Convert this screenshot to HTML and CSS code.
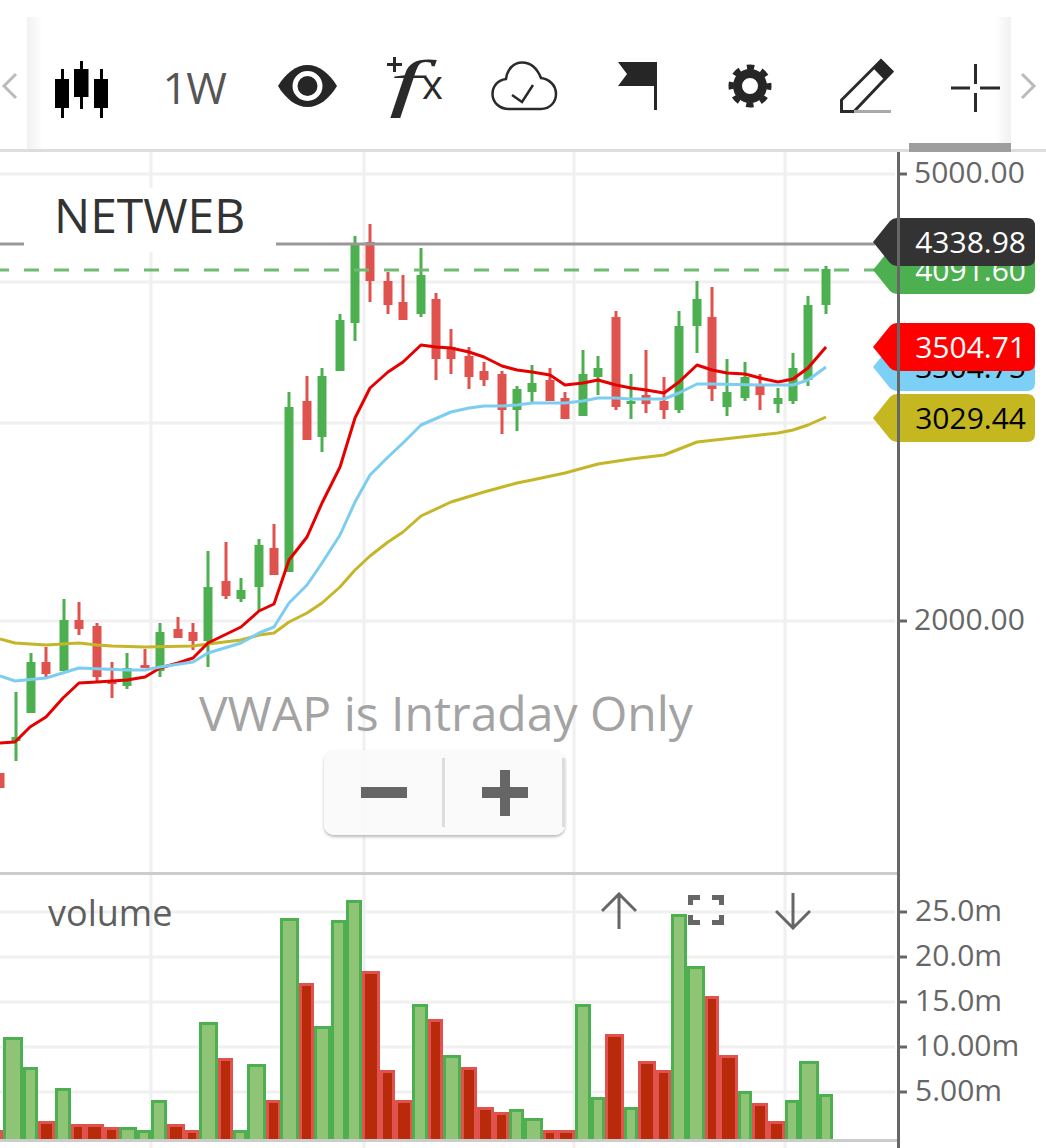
FILE: index.html
```html
<!DOCTYPE html>
<html lang="en">

<head>
    <meta charset="UTF-8">
    <meta name="viewport" content="width=device-width, initial-scale=1.0">
    <title>NETWEB chart</title>
    <link rel="stylesheet" href="styles.css">
</head>

<body>
    <div class="topbar">
        <svg class="chevron chevron-left" viewBox="0 0 18 28"><path d="M15 2 L3 14 L15 26"/></svg>

        <div class="toolbar">
            <div class="tool">
                <svg class="icon" width="60" height="70" viewBox="52 52 60 70">
                    <path class="fill-black" d="M55 79h6V69h3v10h5v29h-5v10h-3v-10h-6zM74 69h6V61h3v8h5.500v28h-5.500v12h-3V97h-6zM94 79h6V69h3v10h5v29h-5v10h-3v-10h-6z"/>
                </svg>
            </div>
            <div class="tool tool-text">1W</div>
            <div class="tool">
                <svg class="icon" width="62" height="70" viewBox="277 52 62 70">
                    <path class="fill-dark" d="M278 86C286 73 296 65 307.500 65S329 73 337 86C329 99 319 107 307.500 107S286 99 278 86z"/>
                    <circle cx="307.500" cy="86" r="12.500" fill="none" stroke="#fff" stroke-width="5"/>
                </svg>
            </div>
            <div class="tool">
                <svg class="icon" width="60" height="70" viewBox="384 52 60 70">
                    <path class="stroke-dark" d="M387 64.500h15M394.500 57v15" stroke-width="3"/>
                    <text class="fx-f" transform="translate(389 104) scale(1.9 1)">f</text>
                    <text class="fx-x" x="422" y="99">x</text>
                </svg>
            </div>
            <div class="tool">
                <svg class="icon" width="70" height="70" viewBox="490 52 70 70">
                    <path class="stroke-dark" d="M509 109H541C550 109 556 102 556 94C556 85 549 79 541 78C537 68 530 62.500 522 62.500C514 62.500 507 69 506 79C498 80 492.500 86 492.500 94C492.500 102 499 109 509 109z" stroke-width="2.500"/>
                    <path class="stroke-dark" d="M512 95L522 102L533 85" stroke-width="2.500"/>
                </svg>
            </div>
            <div class="tool">
                <svg class="icon" width="44" height="70" viewBox="616 52 44 70">
                    <path class="fill-dark" d="M618 62H657V110H654V86H618L627 74z"/>
                </svg>
            </div>
            <div class="tool">
                <svg class="icon" width="48" height="70" viewBox="726 52 48 70">
                    <circle class="gear-body" cx="750" cy="86" r="12.500"/>
                    <circle class="gear-teeth" cx="750" cy="86" r="19"/>
                </svg>
            </div>
            <div class="tool">
                <svg class="icon" width="60" height="70" viewBox="837 52 60 70">
                    <path class="stroke-dark" d="M854 111.500H841.500V100L881 60.500L892 71.500z" stroke-width="3"/>
                    <path class="fill-dark" d="M881 59L893.500 72L885 80.500L873 68z"/>
                    <path d="M854 111.500H891" stroke="#aaa" stroke-width="3" fill="none"/>
                </svg>
            </div>
            <div class="tool">
                <svg class="icon" width="56" height="70" viewBox="948 52 56 70">
                    <path class="stroke-dark" d="M951 88H970M980 88H1000M975.500 64V84M975.500 93V112" stroke-width="3"/>
                </svg>
            </div>
        </div>

        <svg class="chevron chevron-right" viewBox="0 0 18 28"><path d="M3 2 L15 14 L3 26"/></svg>
        <div class="scroll-thumb"></div>
    </div>

    <div class="chart">
        <div class="pane price-pane">
            <svg class="pane-svg" id="price-svg" width="1046" height="720" viewBox="0 152 1046 720"></svg>

            <div class="symbol-label">NETWEB</div>
            <div class="vwap-note">VWAP is Intraday Only</div>

            <div class="zoom-box">
                <div class="zoom-btn">
                    <svg width="46" height="46" viewBox="0 0 46 46"><rect y="17" width="46" height="11"/></svg>
                </div>
                <div class="zoom-btn">
                    <svg width="46" height="46" viewBox="0 0 46 46"><rect y="17" width="46" height="11"/><rect x="18" width="10" height="46"/></svg>
                </div>
            </div>

            <div class="tag tag-green">4091.60</div>
            <div class="tag tag-dark">4338.98</div>
            <div class="tag tag-blue">3304.75</div>
            <div class="tag tag-red">3504.71</div>
            <div class="tag tag-yellow">3029.44</div>
        </div>

        <div class="pane-divider"></div>

        <div class="pane volume-pane">
            <svg class="pane-svg" id="volume-svg" width="1046" height="273" viewBox="0 875 1046 273"></svg>

            <div class="volume-title">volume</div>

            <div class="pane-tools">
                <svg width="36" height="38" viewBox="0 0 36 38"><path d="M1 19L18 2L35 19M18 2V37"/></svg>
                <svg width="36" height="30" viewBox="0 0 36 30"><path class="corners" d="M0 0H12V5H5V10H0zM24 0H36V10H31V5H24zM0 20H5V25H12V30H0zM31 20H36V30H24V25H31z"/></svg>
                <svg width="36" height="38" viewBox="0 0 36 38"><path d="M1 19L18 36L35 19M18 1V36"/></svg>
            </div>
        </div>

        <div class="axis-line"></div>
    </div>

    <script src="chart.js"></script>
</body>

</html>
```

FILE: styles.css
```css
body {
    font-family: "Open Sans", sans-serif;
    margin: 0;
    padding: 0;
    background-color: white;
    width: 1046px;
    height: 1148px;
    overflow: hidden;
}

/* top bar */

.topbar {
    position: relative;
    display: flex;
    align-items: flex-end;
    height: 149px;
    border-bottom: 3px solid #ddd;
}

.chevron {
    position: absolute;
    top: 72px;
    width: 18px;
    height: 28px;
}

.chevron path {
    fill: none;
    stroke: #bbb;
    stroke-width: 3;
}

.chevron-left {
    left: 1px;
}

.chevron-right {
    left: 1019px;
}

.toolbar {
    position: relative;
    margin-left: 27px;
    width: 984px;
    height: 132px;
    box-sizing: border-box;
    padding-top: 8px;
    display: grid;
    grid-template-columns: 109px 116px 111px 102px 119px 107px 118px 115px 103px;
    align-items: center;
    background: linear-gradient(to right, #f1f1f1, white 16px, white 968px, #f1f1f1);
}

.tool {
    display: flex;
    justify-content: center;
    align-items: center;
}

.tool-text {
    font-size: 44px;
    color: #555;
    letter-spacing: -1.500px;
}

.icon {
    display: block;
    overflow: visible;
}

.fill-black {
    fill: black;
}

.fill-dark {
    fill: #262626;
}

.stroke-dark {
    fill: none;
    stroke: #2a2a2a;
}

.fx-f {
    font-family: "Liberation Serif", serif;
    font-style: italic;
    font-size: 64px;
    fill: #2a2a2a;
}

.fx-x {
    font-family: "Open Sans", sans-serif;
    font-size: 40px;
    fill: #2a2a2a;
}

.gear-body {
    fill: none;
    stroke: #262626;
    stroke-width: 9;
}

.gear-teeth {
    fill: none;
    stroke: #262626;
    stroke-width: 5;
    stroke-dasharray: 7.500 7.420;
    stroke-dashoffset: 3.750;
}

.scroll-thumb {
    position: absolute;
    left: 909px;
    bottom: -3px;
    width: 102px;
    height: 9px;
    background-color: #9e9e9e;
}

/* chart */

.chart {
    position: relative;
}

.pane {
    position: relative;
}

.price-pane {
    height: 720px;
}

.volume-pane {
    height: 273px;
}

.pane-svg {
    display: block;
}

.pane-divider {
    width: 898px;
    height: 3px;
    background-color: #ccc;
}

.axis-line {
    position: absolute;
    left: 897px;
    top: 0;
    bottom: 0;
    width: 3px;
    background-color: #666;
}

.grid-line {
    stroke: #f0f0f0;
    stroke-width: 3;
}

.tick {
    stroke: #666;
    stroke-width: 3;
}

.axis-label {
    font-family: "Open Sans", sans-serif;
    font-size: 30px;
    fill: #666;
}

.candle-up {
    fill: #4caf50;
}

.candle-down {
    fill: #e0524e;
}

.ma-line {
    fill: none;
    stroke-width: 3;
    stroke-linejoin: round;
}

.ma-red {
    stroke: #e60000;
}

.ma-blue {
    stroke: #7ccdf0;
}

.ma-yellow {
    stroke: #c4b628;
}

.last-line {
    stroke: #999;
    stroke-width: 3;
}

.current-line {
    stroke: #6fbb72;
    stroke-width: 3;
    stroke-dasharray: 15 15;
}

.vol-up {
    fill: #8fc476;
    stroke: #4caf50;
    stroke-width: 3;
}

.vol-down {
    fill: #b92a0a;
    stroke: #e0524e;
    stroke-width: 3;
}

.baseline {
    stroke: #ccc;
    stroke-width: 3;
}

.symbol-label {
    position: absolute;
    left: 24px;
    top: 36px;
    padding: 0 31px 0 30px;
    height: 64px;
    line-height: 54px;
    font-size: 48px;
    color: #333;
    background-color: white;
}

.vwap-note {
    position: absolute;
    left: 199px;
    top: 528px;
    font-size: 48px;
    line-height: 66px;
    color: #a3a3a3;
}

.zoom-box {
    position: absolute;
    left: 324px;
    top: 598px;
    width: 241px;
    height: 85px;
    display: flex;
    background-color: rgba(250, 250, 250, 0.92);
    border-radius: 10px;
    box-shadow: 0 2px 3px #bbb;
}

.zoom-btn {
    flex: 1;
    display: flex;
    justify-content: center;
    align-items: center;
    position: relative;
}

.zoom-btn::after {
    content: "";
    position: absolute;
    right: 0;
    top: 8px;
    bottom: 8px;
    width: 3px;
    background-color: #ddd;
}

.zoom-btn svg {
    fill: #666;
}

/* price tags */

.tag {
    position: absolute;
    left: 873px;
    width: 162px;
    height: 48px;
    box-sizing: border-box;
    padding-right: 9px;
    text-align: right;
    line-height: 48px;
    font-size: 30px;
    clip-path: path("M24 0H154Q162 0 162 8V40Q162 48 154 48H24Q20 48 17 45L0 24L17 3Q20 0 24 0z");
}

.tag-dark {
    top: 66px;
    background-color: #333;
    color: white;
}

.tag-green {
    top: 94px;
    background-color: #4caf50;
    color: white;
}

.tag-red {
    top: 171px;
    background-color: #f00;
    color: white;
}

.tag-blue {
    top: 191px;
    background-color: #7dd0f5;
    color: black;
}

.tag-yellow {
    top: 242px;
    background-color: #c4b71f;
    color: black;
}

/* volume pane */

.volume-title {
    position: absolute;
    left: 48px;
    top: 14px;
    font-size: 36px;
    line-height: 48px;
    color: #5f5f5f;
}

.pane-tools {
    position: absolute;
    left: 601px;
    top: 17px;
    display: flex;
    gap: 51px;
    align-items: flex-start;
}

.pane-tools path {
    fill: none;
    stroke: #666;
    stroke-width: 3;
}

.pane-tools svg:nth-child(2) {
    margin-top: 3px;
}

.pane-tools .corners {
    fill: #666;
    stroke: none;
}
```

FILE: chart.js
```js
// x, high, low, body top, body bottom, u or d
const candles = [
    [0, 773, 788, 773, 788, 'd'],
    [16, 692, 761, 737, 741, 'u'],
    [31, 653, 713, 662, 713, 'u'],
    [46, 647, 677, 662, 674, 'd'],
    [64, 599, 671, 620, 671, 'u'],
    [79, 602, 635, 620, 629, 'd'],
    [97, 623, 682, 626, 677, 'd'],
    [112, 662, 698, 681, 684, 'd'],
    [127, 653, 689, 668, 686, 'u'],
    [145, 649, 668, 665, 668, 'd'],
    [160, 623, 677, 632, 671, 'u'],
    [178, 617, 638, 629, 638, 'd'],
    [193, 623, 650, 632, 641, 'd'],
    [208, 551, 667, 587, 641, 'u'],
    [226, 542, 599, 581, 596, 'd'],
    [241, 578, 602, 590, 599, 'u'],
    [259, 539, 611, 545, 587, 'u'],
    [274, 524, 575, 548, 575, 'd'],
    [289, 392, 572, 407, 572, 'u'],
    [307, 376, 440, 401, 440, 'd'],
    [322, 368, 452, 376, 437, 'u'],
    [340, 314, 371, 320, 371, 'u'],
    [355, 236, 341, 245, 323, 'u'],
    [370, 224, 302, 242, 281, 'd'],
    [388, 272, 314, 281, 305, 'd'],
    [403, 275, 320, 302, 320, 'd'],
    [421, 248, 317, 275, 314, 'u'],
    [436, 293, 380, 299, 359, 'd'],
    [451, 329, 374, 347, 359, 'd'],
    [469, 347, 389, 356, 377, 'd'],
    [484, 362, 386, 371, 380, 'd'],
    [502, 371, 434, 374, 410, 'd'],
    [517, 386, 431, 389, 410, 'u'],
    [532, 365, 402, 383, 392, 'u'],
    [550, 368, 401, 380, 401, 'd'],
    [565, 392, 419, 398, 419, 'd'],
    [583, 350, 416, 374, 416, 'u'],
    [598, 356, 395, 368, 377, 'u'],
    [616, 311, 410, 317, 407, 'd'],
    [631, 374, 419, 401, 404, 'u'],
    [646, 350, 413, 395, 404, 'd'],
    [664, 377, 419, 401, 410, 'd'],
    [679, 311, 413, 326, 410, 'u'],
    [697, 281, 353, 299, 326, 'u'],
    [712, 287, 401, 317, 389, 'd'],
    [727, 359, 416, 392, 407, 'u'],
    [745, 362, 401, 377, 398, 'u'],
    [760, 374, 410, 386, 395, 'd'],
    [778, 388, 413, 398, 404, 'u'],
    [793, 353, 404, 368, 401, 'u'],
    [808, 296, 386, 305, 380, 'u'],
    [826, 266, 314, 269, 305, 'u']
];

const maRed = '0,743 15,742 30,727 46,717 63,698 79,683 97,682 127,680 145,677 160,668 178,663 193,658 208,643 241,627 259,611 274,604 289,560 307,537 322,503 340,467 355,418 370,388 388,372 403,362 421,345 436,347 451,348 469,352 484,357 502,366 517,370 532,372 550,375 565,385 583,383 598,380 616,385 631,388 646,390 664,393 679,382 697,365 712,370 727,373 745,374 760,378 778,382 793,379 808,368 826,347';
const maBlue = '0,676 15,681 46,678 79,668 127,670 145,670 160,667 193,662 208,653 241,643 259,633 274,627 289,603 307,585 322,563 340,535 355,502 370,475 388,457 403,443 421,425 451,412 469,408 484,406 502,406 517,405 532,403 565,403 583,401 598,398 616,398 631,399 664,399 679,393 697,384 712,384 760,385 793,385 808,380 826,367';
const maYellow = '0,639 15,643 46,645 79,643 97,645 112,646 145,647 193,646 208,644 241,640 259,635 274,633 289,622 307,613 322,603 340,587 355,570 370,556 388,542 403,532 421,516 451,502 484,492 517,483 532,480 565,473 598,464 631,459 664,455 697,442 760,435 778,433 793,430 808,425 826,417';

// left edge, right edge, top, u or d
const volumes = [
    [-4, 3, 1130, 'd'], [3, 23, 1037, 'u'], [23, 38, 1067, 'u'], [38, 55, 1121, 'd'],
    [55, 71, 1088, 'u'], [71, 85, 1124, 'd'], [85, 104, 1124, 'd'], [104, 119, 1127, 'd'],
    [119, 137, 1127, 'u'], [137, 151, 1130, 'u'], [151, 167, 1100, 'u'], [167, 185, 1124, 'd'],
    [185, 199, 1130, 'd'], [199, 218, 1022, 'u'], [218, 233, 1058, 'd'], [233, 247, 1130, 'u'],
    [247, 266, 1064, 'u'], [266, 281, 1100, 'd'], [280, 299, 918, 'u'], [299, 314, 983, 'd'],
    [314, 331, 1026, 'u'], [331, 346, 920, 'u'], [346, 362, 900, 'u'], [362, 380, 971, 'd'],
    [380, 395, 1070, 'd'], [395, 413, 1100, 'd'], [412, 428, 1004, 'u'], [428, 443, 1019, 'd'],
    [443, 461, 1055, 'u'], [461, 477, 1067, 'd'], [477, 494, 1107, 'd'], [494, 509, 1112, 'd'],
    [509, 524, 1109, 'u'], [524, 543, 1118, 'u'], [543, 557, 1130, 'd'], [557, 575, 1130, 'd'],
    [575, 591, 1004, 'u'], [591, 605, 1097, 'u'], [605, 624, 1034, 'd'], [624, 638, 1107, 'u'],
    [638, 656, 1061, 'd'], [656, 671, 1070, 'd'], [671, 687, 914, 'u'], [687, 705, 966, 'u'],
    [705, 719, 996, 'd'], [719, 738, 1055, 'd'], [738, 752, 1091, 'u'], [752, 768, 1103, 'd'],
    [768, 785, 1121, 'd'], [785, 799, 1100, 'u'], [799, 819, 1061, 'u'], [819, 833, 1094, 'u']
];

function hLine(y) {
    return `<line class="grid-line" x1="0" x2="895" y1="${y}" y2="${y}"/>`;
}

function vLine(x, y1, y2) {
    return `<line class="grid-line" x1="${x}" x2="${x}" y1="${y1}" y2="${y2}"/>`;
}

function tick(y) {
    return `<line class="tick" x1="898" x2="907" y1="${y}" y2="${y}"/>`;
}

function axisLabel(text, x, y) {
    return `<text class="axis-label" x="${x}" y="${y + 10}">${text}</text>`;
}

let price = '';
for (const y of [174, 282, 423, 621]) price += hLine(y);
for (const x of [151, 364, 574, 785]) price += vLine(x, 152, 872);

for (const c of candles) {
    const cls = c[5] === 'u' ? 'candle-up' : 'candle-down';
    price += `<rect class="${cls}" x="${c[0] - 1.5}" y="${c[1]}" width="3" height="${c[2] - c[1]}"/>`;
    price += `<rect class="${cls}" x="${c[0] - 4.5}" y="${c[3]}" width="9" height="${c[4] - c[3]}"/>`;
}

price += `<line class="current-line" x1="-6" x2="875" y1="270" y2="270"/>`;
price += `<line class="last-line" x1="0" x2="875" y1="244" y2="244"/>`;
price += `<polyline class="ma-line ma-yellow" points="${maYellow}"/>`;
price += `<polyline class="ma-line ma-red" points="${maRed}"/>`;
price += `<polyline class="ma-line ma-blue" points="${maBlue}"/>`;
price += tick(174) + tick(621);
price += axisLabel('5000.00', 914, 173) + axisLabel('2000.00', 914, 620);
document.getElementById('price-svg').innerHTML = price;

let volume = '';
for (const y of [912, 957, 1002, 1047, 1092]) {
    volume += hLine(y) + tick(y);
}
for (const x of [151, 364, 574, 785]) volume += vLine(x, 875, 1148);

for (const v of volumes) {
    const cls = v[3] === 'u' ? 'vol-up' : 'vol-down';
    volume += `<rect class="${cls}" x="${v[0] + 1.5}" y="${v[2] + 1.5}" width="${v[1] - v[0] - 3}" height="${1139 - v[2]}"/>`;
}
volume += `<line class="baseline" x1="0" x2="898" y1="1140.5" y2="1140.5"/>`;

const volumeLabels = [['25.0m', 911], ['20.0m', 956], ['15.0m', 1001], ['10.00m', 1046], ['5.00m', 1091]];
for (const row of volumeLabels) {
    volume += axisLabel(row[0], 915, row[1]);
}
document.getElementById('volume-svg').innerHTML = volume;
```
